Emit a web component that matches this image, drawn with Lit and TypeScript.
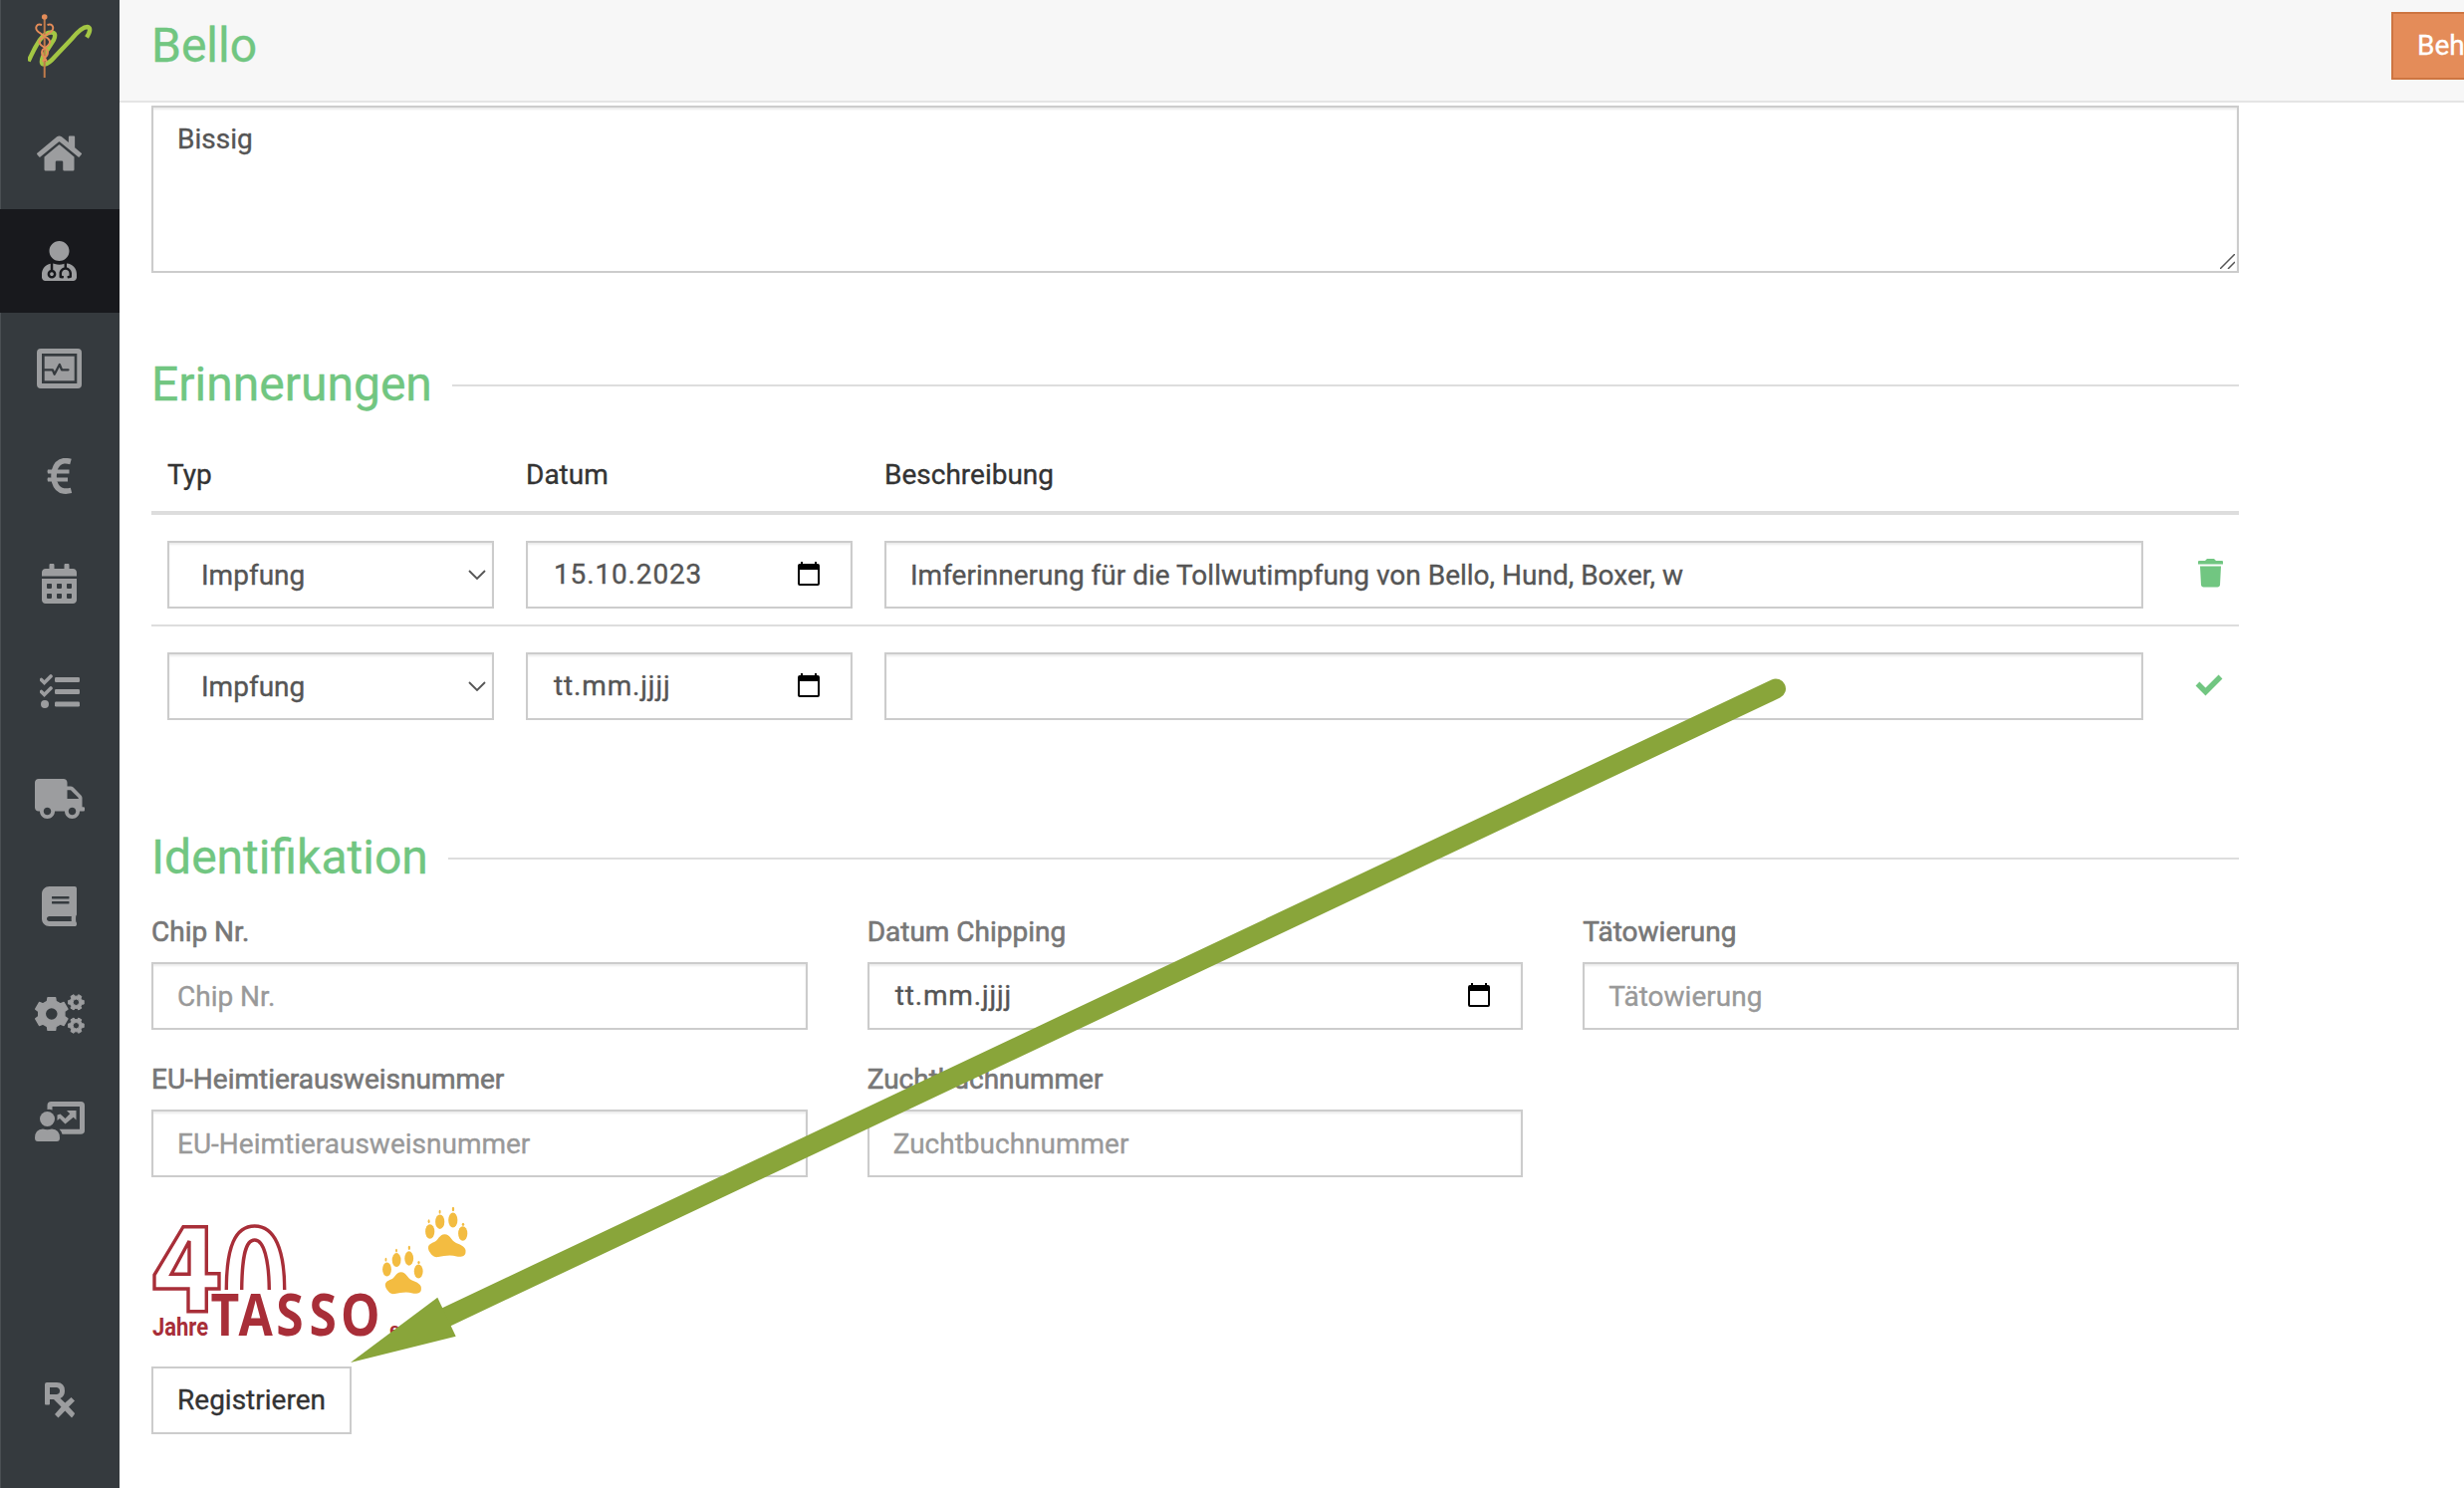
import {LitElement, html, css, svg} from "lit";
import {customElement} from "lit/decorators.js";

const G = "#9c9d9f";
const icon = (w: number, h: number, body: unknown) => html`<svg width=${w} height=${h} viewBox="0 0 ${w} ${h}" fill=${G}>${body}</svg>`;
const fa = (w: number, d: string) => html`<svg width=${w * 40 / 512} height="40" viewBox="0 0 ${w} 512" fill=${G}><path d=${d}/></svg>`;

const HOME = "M280.37 148.26L96 300.11V464a16 16 0 0 0 16 16l112.06-.29a16 16 0 0 0 15.92-16V368a16 16 0 0 1 16-16h64a16 16 0 0 1 16 16v95.64a16 16 0 0 0 16 16.05L464 480a16 16 0 0 0 16-16V300L295.67 148.26a12.19 12.19 0 0 0-15.3 0zM571.6 251.47L488 182.56V44.05a12 12 0 0 0-12-12h-56a12 12 0 0 0-12 12v72.61L318.47 43a48 48 0 0 0-61 0L4.34 251.47a12 12 0 0 0-1.6 16.9l25.5 31A12 12 0 0 0 45.15 301l235.22-193.74a12.19 12.19 0 0 1 15.3 0L530.9 301a12 12 0 0 0 16.9-1.6l25.5-31a12 12 0 0 0-1.7-16.93z";
const DOCTOR = "M224 256c70.7 0 128-57.3 128-128S294.7 0 224 0 96 57.3 96 128s57.3 128 128 128zM104 424c0 13.3 10.7 24 24 24s24-10.7 24-24-10.7-24-24-24-24 10.7-24 24zm216-135.4v49c36.5 7.4 64 39.8 64 78.4v41.7c0 7.6-5.4 14.2-12.9 15.7l-32.2 6.4c-4.3.9-8.5-1.9-9.4-6.3l-3.1-15.7c-.9-4.3 1.9-8.6 6.3-9.4l19.3-3.9V416c0-62.8-96-65.1-96 1.9v26.7l19.3 3.9c4.3.9 7.1 5.1 6.3 9.4l-3.1 15.7c-.9 4.3-5.1 7.1-9.4 6.3l-31.2-4.2c-7.9-1.1-13.8-7.8-13.8-15.9V416c0-38.6 27.5-70.9 64-78.4v-45.2c-2.2.7-4.4 1.1-6.6 1.9-18 6.3-37.3 9.8-57.4 9.8s-39.4-3.5-57.4-9.8c-7.4-2.6-14.9-4.2-22.6-5.2v81.6c23.1 6.9 40 28.1 40 53.4 0 30.9-25.1 56-56 56s-56-25.1-56-56c0-25.3 16.9-46.5 40-53.4v-80.4C48.5 301 0 355.8 0 422.4v44.8C0 491.9 20.1 512 44.8 512h358.4c24.7 0 44.8-20.1 44.8-44.8v-44.8c0-72-56.8-130.3-128-133.8z";
const CALENDAR = "M0 464c0 26.500 21.500 48 48 48h352c26.500 0 48-21.500 48-48V192H0v272zm320-196c0-6.600 5.400-12 12-12h40c6.600 0 12 5.400 12 12v40c0 6.600-5.400 12-12 12h-40c-6.600 0-12-5.400-12-12v-40zm0 128c0-6.600 5.400-12 12-12h40c6.600 0 12 5.400 12 12v40c0 6.600-5.400 12-12 12h-40c-6.600 0-12-5.400-12-12v-40zM192 268c0-6.600 5.400-12 12-12h40c6.600 0 12 5.400 12 12v40c0 6.600-5.400 12-12 12h-40c-6.600 0-12-5.400-12-12v-40zm0 128c0-6.600 5.400-12 12-12h40c6.600 0 12 5.400 12 12v40c0 6.600-5.400 12-12 12h-40c-6.600 0-12-5.400-12-12v-40zM64 268c0-6.600 5.400-12 12-12h40c6.600 0 12 5.400 12 12v40c0 6.600-5.400 12-12 12H76c-6.600 0-12-5.400-12-12v-40zm0 128c0-6.600 5.400-12 12-12h40c6.600 0 12 5.400 12 12v40c0 6.600-5.400 12-12 12H76c-6.600 0-12-5.400-12-12v-40zM400 64h-48V16c0-8.800-7.200-16-16-16h-32c-8.800 0-16 7.200-16 16v48H160V16c0-8.800-7.200-16-16-16h-32c-8.800 0-16 7.200-16 16v48H48C21.500 64 0 85.500 0 112v48h448v-48c0-26.500-21.500-48-48-48z";
const BOOK = "M448 360V24c0-13.300-10.700-24-24-24H96C43 0 0 43 0 96v320c0 53 43 96 96 96h328c13.300 0 24-10.700 24-24v-16c0-7.500-3.500-14.300-8.900-18.700-4.200-15.400-4.200-59.300 0-74.700 5.400-4.300 8.900-11.100 8.900-18.600zM128 134c0-3.300 2.700-6 6-6h212c3.300 0 6 2.700 6 6v20c0 3.300-2.700 6-6 6H134c-3.300 0-6-2.700-6-6v-20zm0 64c0-3.300 2.700-6 6-6h212c3.300 0 6 2.700 6 6v20c0 3.300-2.700 6-6 6H134c-3.300 0-6-2.700-6-6v-20zm253.400 250H96c-17.700 0-32-14.300-32-32 0-17.600 14.400-32 32-32h285.400c-1.900 17.100-1.900 46.900 0 64z";
const TRUCK = "M640 392v-16c0-8.800-7.200-16-16-16h-16V243.900c0-12.700-5.100-24.900-14.100-33.900L494 110.100c-9-9-21.200-14.100-33.900-14.100H416V48c0-26.500-21.500-48-48-48H48C21.500 0 0 21.500 0 48v320c0 26.500 21.500 48 48 48h16c0 53 43 96 96 96s96-43 96-96h128c0 53 43 96 96 96s96-43 96-96h48c8.800 0 16-7.200 16-16zM160 464c-26.500 0-48-21.500-48-48s21.500-48 48-48 48 21.500 48 48-21.500 48-48 48zM416 144h44.100l99.900 99.900V256H416zM480 464c-26.500 0-48-21.500-48-48s21.500-48 48-48 48 21.500 48 48-21.500 48-48 48z";

const gearPath = (cx: number, cy: number, ro: number, ri: number, hole: number, rot: number) => {
  const p: string[] = [];
  for (let i = 0; i < 6; i++) {
    const a = rot + i * 60;
    for (const [d, r] of [[-19, ri], [-13, ro], [13, ro], [19, ri]]) {
      const t = (a + d) * Math.PI / 180;
      p.push(`${(cx + r * Math.cos(t)).toFixed(2)} ${(cy + r * Math.sin(t)).toFixed(2)}`);
    }
  }
  return `M${p.join("L")}ZM${cx + hole} ${cy}a${hole} ${hole} 0 1 0 ${-2 * hole} 0a${hole} ${hole} 0 1 0 ${2 * hole} 0Z`;
};

const NAV = [
  {n: "home", i: fa(576, HOME)},
  {n: "patient", on: true, i: fa(448, DOCTOR)},
  {n: "monitor", i: icon(45, 40, svg`<path fill-rule="evenodd" d="M4 0H41Q45 0 45 4V36Q45 40 41 40H4Q0 40 0 36V4Q0 0 4 0ZM5 5V35H40.300V5Z"/><rect x="7.700" y="7.700" width="30" height="24.600"/><path d="M7 21.300H15.800L17.700 25.800L22.800 16L25 21.300H31.500" fill="none" stroke="#353a3e" stroke-width="2.300" stroke-linecap="round" stroke-linejoin="round"/>`)},
  {n: "euro", i: icon(26, 36, svg`<path d="M24 3.500Q20 2.400 17 2.800Q10 4 7.800 12Q6.300 18 7.800 24Q10 32 17 33Q20.500 33.400 24.500 32.400" fill="none" stroke=${G} stroke-width="5.600"/><path d="M1 11.500H22.500V15.500H1Q0 13 1 11.500ZM1 19.500H21V23.500H1Q0 21 1 19.500Z"/>`)},
  {n: "calendar", i: fa(448, CALENDAR)},
  {n: "tasks", i: icon(40, 34, svg`<path d="M1.500 5.500L4.500 8.500L11 2M1.500 17.500L4.500 20.500L11 14" fill="none" stroke=${G} stroke-width="3.600" stroke-linecap="round"/><circle cx="5" cy="30" r="4"/><rect x="15" y="3" width="25" height="5" rx="1.200"/><rect x="15" y="15" width="25" height="5" rx="1.200"/><rect x="15" y="27.500" width="25" height="5" rx="1.200"/>`)},
  {n: "truck", i: fa(640, TRUCK)},
  {n: "book", i: fa(448, BOOK)},
  {n: "cogs", i: icon(50, 40, svg`<path fill-rule="evenodd" stroke=${G} stroke-width="1.500" stroke-linejoin="round" d=${gearPath(16.8, 20, 16.8, 13.3, 6.5, 30)}/><path fill-rule="evenodd" stroke=${G} stroke-width="1" stroke-linejoin="round" d=${gearPath(41.4, 8.3, 8, 6.2, 3.2, 0) + gearPath(41.4, 31.7, 8, 6.2, 3.2, 0)}/>`)},
  {n: "training", i: icon(50, 40, svg`<path d="M12.500 8V4Q12.500 0 16.500 0H46Q50 0 50 4V29Q50 32.800 46 32.800H27.500Q26.500 29.500 24.500 27.800H45V5H17.500V8.500Q15 7.500 12.500 8Z"/><circle cx="12.500" cy="17.500" r="7.500"/><path d="M0 36.500Q0 28 8 27.500Q12.500 29 17 27.500Q25 28 25 36.500Q25 40 22 40H3Q0 40 0 36.500Z"/><path d="M32 9H41.500V18.500L38.700 15.700L30.500 22.500L25 17L22.500 19V13.500L25.500 12.500L30.500 17L35.200 12.200Z"/>`)},
];
const RX = icon(30, 36, svg`<path fill-rule="evenodd" d="M0 2Q0 0 2 0H12Q20 0 20 8.500Q20 14 15.500 16L20.300 20.500L26.500 15L30 18.500L24 24.500L30 31Q30 32 27 35.500L20.300 28.500L13.500 35.500L10 32L16.500 24.500L9 17H5V21.500Q5 22.500 4 22.500H1Q0 22.500 0 21.500ZM5 5V12H12Q15 11.500 15 8.500Q15 5.500 12 5Z"/>`);
const CAL = html`<svg class="cal" width="22" height="24" viewBox="0 0 22 24"><path fill-rule="evenodd" d="M3 0H5V2H17V0H19V2H20Q22 2 22 4V22Q22 24 20 24H2Q0 24 0 22V4Q0 2 2 2H3ZM2 8V22H20V8Z"/></svg>`;
const PAW = svg`<ellipse cx="4.700" cy="24.500" rx="4.600" ry="7.300"/><ellipse cx="14.700" cy="14.700" rx="4.600" ry="7.300"/><ellipse cx="27.800" cy="13" rx="4.600" ry="7.500"/><ellipse cx="37.700" cy="26.500" rx="4.600" ry="7.300"/><ellipse cx="3.600" cy="14.200" rx="1" ry="2"/><ellipse cx="14.600" cy="4.800" rx="1" ry="2"/><ellipse cx="28" cy="2" rx="1.200" ry="2.200"/><ellipse cx="38" cy="17.300" rx="1.200" ry="1.600"/><path d="M19.500 27.300C25 27.300 25.500 33.300 31 36C36 37.500 41.500 41 40.500 45C40.500 49.500 36 50.300 31.500 49.500C25 47.500 19 49 13 50C8 51 5.500 47 3.500 43.500C1.500 38 5.500 36.500 9 35C13 33.500 14 27.500 19.500 27.300Z"/>`;

@customElement("app-root")
export class AppRoot extends LitElement {
  static styles = css`
    :host{display:block;font-family:Roboto,sans-serif;font-size:28px;line-height:40px;color:#333;-webkit-text-stroke:.35px currentColor}
    *{box-sizing:border-box}
    svg{display:block;flex:none}
    .app{position:relative;display:flex;width:2474px;height:1494px;overflow:hidden;background:#fff}
    .side{width:120px;flex:none;background:#353a3e;border-left:1px solid #4a4f53;display:flex;flex-direction:column}
    .logo{height:102px;flex:none;padding:14px 0 0 27px}
    .item{height:104px;flex:none;margin-bottom:4px;display:flex;align-items:center;justify-content:center;padding-right:2px}
    .item.on{background:#18191d;margin-left:-1px;padding-right:1px}
    .rx{margin-top:auto;height:106px;padding:0 0 0 44px}
    .page{flex:1;min-width:0;display:flex;flex-direction:column}
    .head{height:103px;flex:none;background:#f7f7f7;border-bottom:2px solid #e5e5e5;display:flex;justify-content:space-between;align-items:flex-start;overflow:hidden}
    h1,h2{margin:0;font-weight:400;font-size:48px;line-height:60px;color:#71c681}
    h1{padding:16px 0 0 32px}
    h2{padding-bottom:2px}
    .cta{width:73px;flex:none;height:68px;margin-top:12px;border:2px solid #cd7541;border-right:0;background:#e48c59;color:#fff;font:inherit;padding:0 0 0 24px;text-align:left;white-space:nowrap;overflow:hidden}
    .body{width:2096px;margin:3px 0 0 32px;display:flex;flex-direction:column}
    .field{height:68px;width:100%;border:2px solid #ccc;background:#fff;color:#555;padding:0 24px;font:inherit;display:flex;align-items:center;box-shadow:inset 0 2px 2px rgba(0,0,0,.075);border-radius:0;outline:0;white-space:nowrap}
    .field::placeholder{color:#999;opacity:1}
    .area{height:168px;padding:12px 2px 2px 24px;align-items:flex-start;justify-content:space-between}
    .area svg{align-self:flex-end}
    .legend{display:flex;align-items:center;height:60px;gap:20px}
    .legend i{flex:1;height:2px;background:#ddd}
    .l1{margin-top:83px}
    .l2{margin-top:93px}
    .row{display:grid;grid-template-columns:328px 328px 1264px 1fr;column-gap:32px;padding:26px 16px 16px;border-bottom:2px solid #ddd}
    .row > *{min-width:0}
    .row.th{padding:40px 16px 16px;border-bottom-width:4px}
    .row.last{border-bottom:0}
    .sel{padding:1px 6px 0 32px;justify-content:space-between}
    .sel svg{margin-bottom:1px}
    .date{padding:0 31px 1px 26px;justify-content:space-between;letter-spacing:.85px}
    .cal{margin-bottom:2px}
    .act{display:flex;align-items:center;justify-content:flex-end;padding-bottom:3px}
    .grid{display:grid;grid-template-columns:repeat(3,1fr);column-gap:60px;row-gap:30px;margin-top:24px}
    label{display:block;height:40px;margin-bottom:10px;color:#777;-webkit-text-stroke-width:.6px}
    .tasso{margin-top:28px;height:138px;overflow:visible}
    .btn{margin-top:24px;width:201px;height:68px;border:2px solid #ccc;background:#fff;color:#333;font:inherit;padding:0}
    .arrow{position:absolute;left:0;top:0;pointer-events:none}
  `;
  private date(v: string) { return html`<div class="field date"><span>${v}</span>${CAL}</div>`; }
  private sel() { return html`<div class="field sel"><span>Impfung</span><svg width="18" height="10" viewBox="0 0 18 10"><path d="M1 1L9 9L17 1" fill="none" stroke="#555" stroke-width="1.800"/></svg></div>`; }
  private input(l: string, date = false) {
    return html`<div><label>${l}</label>${date ? this.date("tt.mm.jjjj") : html`<input class="field" placeholder=${l}>`}</div>`;
  }
  render() {
    return html`<div class="app">
      <nav class="side">
        <div class="logo"><svg width="66" height="66" viewBox="0 0 66 66" fill="none">
          <path d="M.6 47.500Q6 35 12 26Q18 18 24 18.500Q29 19 26 26L15 43Q12 51 17 50.500Q21 50 27 43L44 25Q54 13 59.500 13Q65 14 59 23.500" stroke="#a3c644" stroke-width="4.400"/>
          <path d="M16.700 3V64" stroke="#c07b4b" stroke-width="2"/><circle cx="16.700" cy="3" r="2.800" fill="#e48c59"/>
          <path d="M14 11C9 9 6 14 10.500 18L20 24.500C24 28 22 31 17 34C13 36.500 13 41 17 44L19 48M19.500 11C24.500 9 27.500 14 23 18L13.500 24.500C9.500 28 11.500 31 17 34C21 36.500 21 41 17 44L15 48" stroke="#e48c59" stroke-width="1.900"/>
        </svg></div>
        ${NAV.map(x => html`<div class="item ${x.on ? "on" : ""}">${x.i}</div>`)}
        <div class="rx">${RX}</div>
      </nav>
      <main class="page">
        <header class="head"><h1>Bello</h1><button class="cta">Beh</button></header>
        <div class="body">
          <div class="field area"><span>Bissig</span><svg width="15" height="15" viewBox="0 0 15 15"><path d="M0 15L15 0M8 15L15 8" stroke="#555" stroke-width="1.500"/></svg></div>
          <div class="legend l1"><h2>Erinnerungen</h2><i></i></div>
          <div class="row th"><span>Typ</span><span>Datum</span><span>Beschreibung</span></div>
          <div class="row">${this.sel()}${this.date("15.10.2023")}
            <input class="field" .value=${"Imferinnerung für die Tollwutimpfung von Bello, Hund, Boxer, w"}>
            <span class="act"><svg width="25" height="29" viewBox="0 0 25 29" fill="#71c681"><path d="M0 3Q0 2 1 2H7L9 0H16L18 2H24Q25 2 25 3V5.500H0ZM2 7.500H23L22 26.500Q21.500 28.500 19.500 28.500H5.500Q3.500 28.500 3 26.500Z"/></svg></span></div>
          <div class="row last">${this.sel()}${this.date("tt.mm.jjjj")}<input class="field">
            <span class="act"><svg width="28" height="22" viewBox="0 0 28 22"><path d="M2.500 9.500L10.500 17.500L25.500 2.500" fill="none" stroke="#71c681" stroke-width="5.500"/></svg></span></div>
          <div class="legend l2"><h2>Identifikation</h2><i></i></div>
          <div class="grid">${this.input("Chip Nr.")}${this.input("Datum Chipping", true)}${this.input("Tätowierung")}${this.input("EU-Heimtierausweisnummer")}${this.input("Zuchtbuchnummer")}</div>
          <svg class="tasso" width="330" height="138" viewBox="0 0 330 138">
            <g fill="none" stroke="#a82e38" stroke-width="3.400">
              <path d="M32 21.700H55.300V68.700H68V84H55.300V106.700H37V84H3V70ZM38 36V69.300H20Z"/>
              <path d="M75.300 85C75.300 42 84 21 103.700 21C124 21 133.700 45 133.700 85M90.700 85C91 53 94 35 103.700 35C113 35 118 55 118.300 85"/>
            </g>
            <g fill="#a82e38" font-weight="700">
              <text x="1" y="130.500" font-size="26.500" font-family="Roboto" textLength="56" lengthAdjust="spacingAndGlyphs">Jahre</text>
              <text transform="scale(.85 1)" x="70 103 147.500 186.500 223.500" y="131" font-size="58.500" font-family="Open Sans" style="-webkit-text-stroke:1.6px #a82e38">TASSO</text>
              <text x="239" y="130.500" font-size="18" font-family="Open Sans">e.V.</text>
            </g>
            <g fill="#f3bc41"><g transform="translate(275 2)">${PAW}</g><g transform="translate(232 41) scale(.96)">${PAW}</g></g>
          </svg>
          <button class="btn">Registrieren</button>
        </div>
      </main>
      <svg class="arrow" width="2474" height="1494" viewBox="0 0 2474 1494"><path d="M1783 691.500L448.300 1322.200" stroke="#89a53a" stroke-width="20" stroke-linecap="round"/><path d="M352 1368L439.300 1302.700L457.700 1341.700Z" fill="#89a53a"/></svg>
    </div>`;
  }
}
